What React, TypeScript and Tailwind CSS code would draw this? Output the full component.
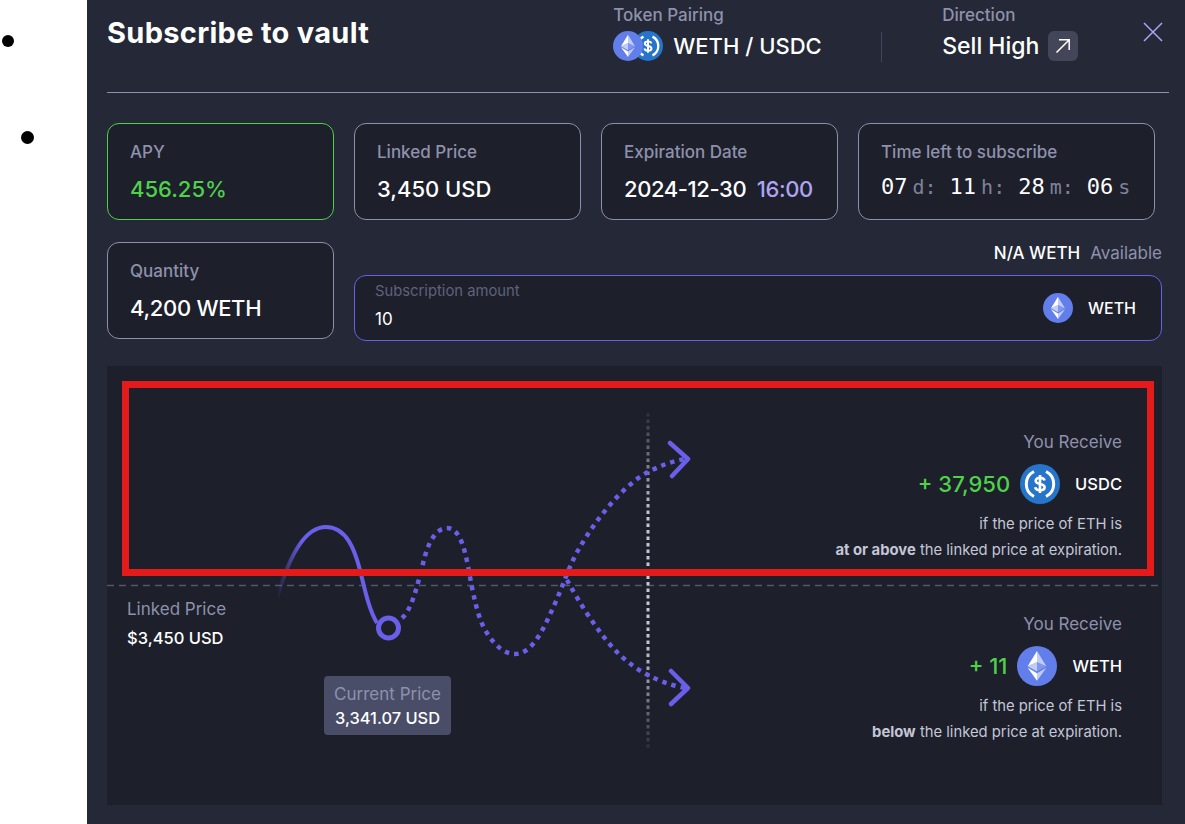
const Eth = ({ size }: { size: number }) => (
  <svg width={size} height={size} viewBox="0 0 40 40" className="relative z-10 shrink-0">
    <circle cx="20" cy="20" r="20" fill="#627EEA" />
    <path d="M20 5v11l9.300 4.200z" fill="#fff" fillOpacity="0.6" />
    <path d="M20 5l-9.300 15.200L20 16z" fill="#fff" />
    <path d="M20 27.300v7.500l9.400-13z" fill="#fff" fillOpacity="0.6" />
    <path d="M20 34.800v-7.500l-9.300-5.500z" fill="#fff" />
    <path d="M20 25.500l9.300-5.300L20 16z" fill="#fff" fillOpacity="0.2" />
    <path d="M10.700 20.200l9.300 5.300V16z" fill="#fff" fillOpacity="0.6" />
  </svg>
);

const Usdc = ({ size }: { size: number }) => (
  <svg width={size} height={size} viewBox="0 0 40 40" className="shrink-0">
    <circle cx="20" cy="20" r="20" fill="#2775CA" />
    <path d="M14 7.500a14 14 0 0 0 0 25" fill="none" stroke="#fff" strokeWidth="3" />
    <path d="M26 7.500a14 14 0 0 1 0 25" fill="none" stroke="#fff" strokeWidth="3" />
    <path
      d="M24.500 16.500c-.4-1.800-2-2.700-4.500-2.700s-4.300 1-4.300 3c0 4.600 8.900 2 8.900 6.400 0 2-2 3.100-4.600 3.100s-4.400-1-4.800-3M20 11v18"
      fill="none"
      stroke="#fff"
      strokeWidth="2.600"
    />
  </svg>
);

const Card = ({
  label,
  className,
  children,
}: {
  label: string;
  className: string;
  children: React.ReactNode;
}) => (
  <div className={`h-[97px] rounded-xl border bg-[#1d1f2b] pl-[22px] pt-4 ${className}`}>
    <div className="text-[17px] font-medium leading-[24px] text-[#8e91ab]">{label}</div>
    {children}
  </div>
);

const Payoff = ({
  amount,
  token,
  icon,
  strong,
  rest,
}: {
  amount: string;
  token: string;
  icon: React.ReactNode;
  strong: string;
  rest: string;
}) => (
  <div className="flex flex-col items-end pr-10 text-right">
    <div className="text-[17px] leading-[24px] text-[#8e91ab]">You Receive</div>
    <div className="mt-[10px] flex h-10 items-center">
      <span className="text-[22px] font-medium text-[#4fd14a]">{amount}</span>
      <span className="ml-[10px]">{icon}</span>
      <span className="ml-[15px] text-[16.500px] font-medium text-white">{token}</span>
    </div>
    <div className="mt-[7px] text-[14.800px] leading-[26px] text-[#c3c6d6]">
      <div>if the price of ETH is</div>
      <div>
        <b className="font-bold">{strong}</b> {rest}
      </div>
    </div>
  </div>
);

const Countdown = () => {
  const parts = [
    ["07", "d:"],
    ["11", "h:"],
    ["28", "m:"],
    ["06", "s"],
  ];
  return (
    <div className="mt-[10px] flex items-baseline gap-[13px] font-['DejaVu_Sans_Mono',monospace] leading-[26px]">
      {parts.map(([n, u]) => (
        <span key={u} className="flex items-baseline gap-[5px]">
          <span className="text-[22px] text-white">{n}</span>
          <span className="text-[20px] text-[#7f8299]">{u}</span>
        </span>
      ))}
    </div>
  );
};

export default function App() {
  return (
    <div className="flex h-[824px] w-[1185px] overflow-hidden bg-white font-['Inter',sans-serif]">
      {/* list dots left of the modal */}
      <div className="w-[87px] shrink-0 pl-[2px] pt-[35px]">
        <div className="size-[12px] rounded-full bg-black" />
        <div className="ml-[19px] mt-[84px] size-[13px] rounded-full bg-black" />
      </div>

      <div className="relative flex-1 bg-[#252836] pl-5 pr-4">
        {/* Header */}
        <div className="flex h-[93px] items-start border-b border-[#8e91ab]">
          <h2 className="mt-[13px] text-[29px] font-bold leading-[40px] tracking-[0.3px] text-white">Subscribe to vault</h2>
          <div className="ml-[244px] mt-[3px] w-[268px]">
            <div className="text-[17px] font-medium leading-[24px] text-[#8e91ab]">Token Pairing</div>
            <div className="mt-[4px] flex h-[30px] items-center">
              <Eth size={30} />
              <span className="-ml-[10px]">
                <Usdc size={30} />
              </span>
              <span className="ml-[10px] text-[22px] font-medium text-white">WETH / USDC</span>
            </div>
          </div>
          <div className="mt-[32px] h-[30px] w-px bg-[#434659]" />
          <div className="ml-[60px] mt-[3px]">
            <div className="text-[17px] font-medium leading-[24px] text-[#8e91ab]">Direction</div>
            <div className="mt-[4px] flex h-[30px] items-center">
              <span className="text-[23px] font-medium text-white">Sell High</span>
              <span className="ml-[9px] flex size-[30px] items-center justify-center rounded-md bg-[#434659]">
                <svg width="16" height="16" viewBox="0 0 16 16" fill="none" stroke="#fff" strokeWidth="1.500">
                  <path d="M1.500 14.500 14 2M4 1.800h10.200V12" />
                </svg>
              </span>
            </div>
          </div>
          <svg className="ml-[65px] mt-[22px]" width="20" height="20" viewBox="0 0 20 20" fill="none" stroke="#ada5f2" strokeWidth="1.500">
            <path d="M1 1l18 18M19 1 1 19" />
          </svg>
        </div>

        {/* Stats */}
        <div className="mt-[30px] flex gap-5">
          <Card label="APY" className="w-[227px] border-[#4fd14a]">
            <div className="mt-[10px] text-[22px] font-medium leading-[30px] text-[#4fd14a]">456.25%</div>
          </Card>
          <Card label="Linked Price" className="w-[227px] border-[#8e91ab]">
            <div className="mt-[10px] text-[22px] font-medium leading-[30px] text-white">3,450 USD</div>
          </Card>
          <Card label="Expiration Date" className="w-[237px] border-[#8e91ab]">
            <div className="mt-[10px] text-[22px] font-medium leading-[30px] tracking-[-0.4px] text-white">
              2024-12-30 <span className="ml-[5px] text-[#ada5f2]">16:00</span>
            </div>
          </Card>
          <Card label="Time left to subscribe" className="w-[297px] border-[#8e91ab]">
            <Countdown />
          </Card>
        </div>

        <div className="mt-[22px] flex gap-5">
          <Card label="Quantity" className="w-[227px] border-[#8e91ab]">
            <div className="mt-[10px] text-[22px] font-medium leading-[30px] tracking-[-0.3px] text-white">4,200 WETH</div>
          </Card>
          <div className="w-[808px]">
            <div className="flex h-[33px] items-start justify-end gap-[10px] pt-[1px] text-[17px] leading-[20px]">
              <span className="font-medium text-white">N/A WETH</span>
              <span className="text-[#8e91ab]">Available</span>
            </div>
            <div className="flex h-[66px] items-center justify-between rounded-xl border border-[#6a5fe8] bg-[#1d1f2b] pl-5 pr-[25px]">
              <div className="-mt-[3px]">
                <div className="-mt-[2px] text-[14.800px] leading-[20px] text-[#5f627c]">Subscription amount</div>
                <div className="mt-[6px] text-[17px] leading-[24px] text-white">10</div>
              </div>
              <div className="flex items-center gap-[15px]">
                <Eth size={30} />
                <span className="text-[16px] font-medium text-white">WETH</span>
              </div>
            </div>
          </div>
        </div>

        {/* Chart */}
        <div className="relative mt-[25px] h-[439px] w-[1055px] bg-[#1d1f2b]">
          <div className="h-[219px] pt-[64px]">
            <Payoff amount="+ 37,950" token="USDC" icon={<Usdc size={40} />} strong="at or above" rest="the linked price at expiration." />
          </div>
          <div className="relative pt-[27px]">
            <div className="absolute left-5 top-[12px]">
              <div className="text-[17px] leading-[24px] text-[#8e91ab]">Linked Price</div>
              <div className="mt-[5px] text-[16.500px] font-medium leading-[24px] text-white">$3,450 USD</div>
            </div>
            <Payoff amount="+ 11" token="WETH" icon={<Eth size={40} />} strong="below" rest="the linked price at expiration." />
          </div>

          <svg className="absolute left-0 top-0" width="1055" height="439" fill="none">
            <defs>
              <linearGradient id="fade" x1="170" y1="0" x2="195" y2="0" gradientUnits="userSpaceOnUse">
                <stop offset="0" stopColor="#6a5fe8" stopOpacity="0" />
                <stop offset="1" stopColor="#6a5fe8" />
              </linearGradient>
              <linearGradient id="vfade" x1="541" y1="47" x2="541" y2="382" gradientUnits="userSpaceOnUse">
                <stop offset="0" stopColor="#c3c6d6" stopOpacity="0.1" />
                <stop offset="0.3" stopColor="#c3c6d6" />
                <stop offset="0.7" stopColor="#c3c6d6" />
                <stop offset="1" stopColor="#c3c6d6" stopOpacity="0.1" />
              </linearGradient>
            </defs>
            <path d="M0 219.500H1055" stroke="#53566e" strokeWidth="1.500" strokeDasharray="7 5" />
            <path d="M541 47V382" stroke="url(#vfade)" strokeWidth="3" strokeDasharray="3.500 3" />
            <path
              d="M170 232C182 190 198 161 219 161C240 161 248 185 253 204C258 224 262 244 270 257"
              stroke="url(#fade)"
              strokeWidth="4"
            />
            <circle cx="281.500" cy="262" r="10" stroke="#6a5fe8" strokeWidth="5" />
            <path
              d="M295 252C306 243 312 212 318 190C323 172 331 162 340 162C352 162 357 180 361 200C366 228 371 254 380 267C388 280 398 288 408 288C425 288 436 264 446 242C456 220 463 197 473 181C488 155 515 120 541 106C553 100 565 95 578 93"
              stroke="#6a5fe8"
              strokeWidth="4.500"
              strokeDasharray="4.500 5"
            />
            <path
              d="M460 214C472 236 490 265 508 284C525 302 548 316 578 322"
              stroke="#6a5fe8"
              strokeWidth="4.500"
              strokeDasharray="4.500 5"
            />
            <path d="M563 77l18 16-16 17M564 305l17 17-17 16" stroke="#6a5fe8" strokeWidth="4.500" strokeLinecap="round" strokeLinejoin="round" />
          </svg>

          {/* Current price tooltip */}
          <div className="absolute left-[217px] top-[310px] flex h-[59px] w-[127px] flex-col items-center justify-center rounded bg-[#4a4d68]">
            <div className="text-[17px] leading-[24px] text-[#8e91ab]">Current Price</div>
            <div className="text-[16.400px] font-medium leading-[24px] text-white">3,341.07 USD</div>
          </div>

          {/* Annotation box */}
          <div className="absolute left-[15px] top-[15px] h-[195px] w-[1032px] border-[7px] border-[#e31b1b]" />
        </div>
      </div>
    </div>
  );
}
